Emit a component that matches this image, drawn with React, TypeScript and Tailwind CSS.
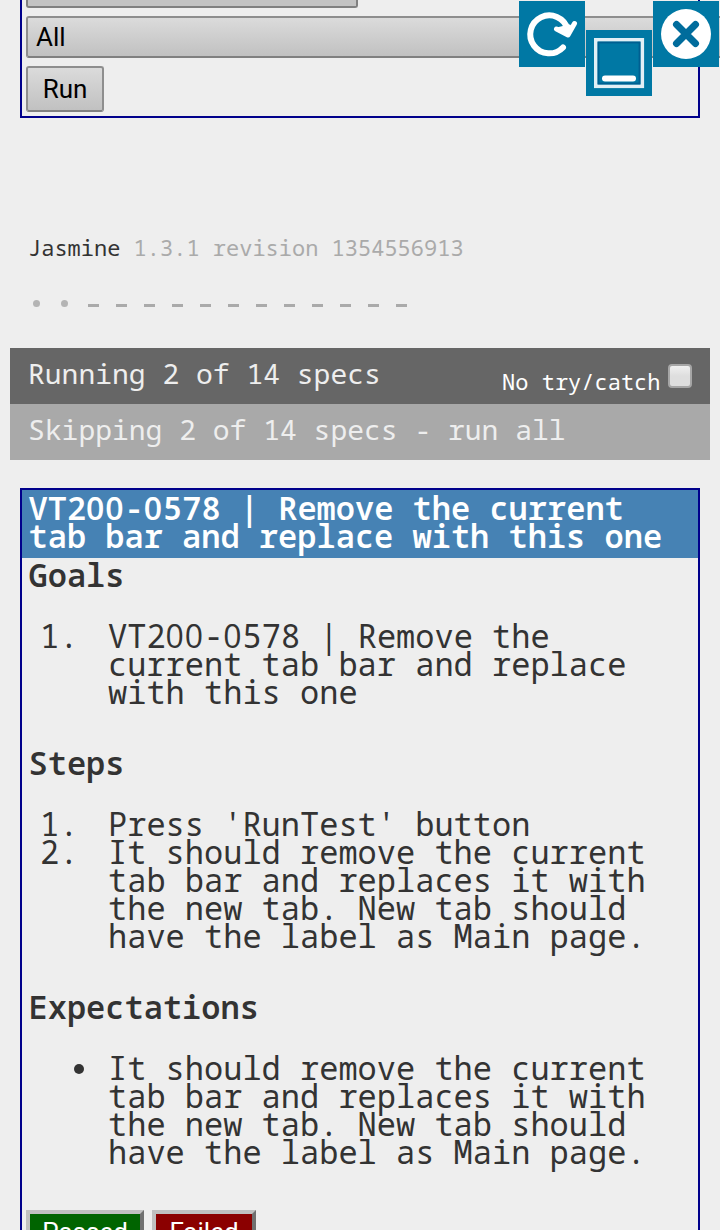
import type { ReactNode } from "react";

// Noto Sans Mono draws a slashed zero; plain zeros come from Open Sans at the same advance.
function Mono({ text }: { text: string }) {
  return (
    <>
      {text.split(/(0+)/).map((part, i) =>
        part.startsWith("0") ? (
          <span key={i} className="font-['Open_Sans',sans-serif] tracking-[0.029em]">{part}</span>
        ) : (
          part
        ),
      )}
    </>
  );
}

function Heading({ children }: { children: ReactNode }) {
  return <h2 className="-mt-px pb-px pl-[0.5px] font-semibold">{children}</h2>;
}

function Item({ marker, lines }: { marker: ReactNode; lines: string[] }) {
  return (
    <li className="flex">
      <span className="w-[68px] shrink-0">{marker}</span>
      <span className="whitespace-nowrap">
        {lines.map((line) => (
          <span key={line} className="block"><Mono text={line} /></span>
        ))}
      </span>
    </li>
  );
}

const replaced = [
  "It should remove the current",
  "tab bar and replaces it with",
  "the new tab. New tab should",
  "have the label as Main page.",
];

const skipped = Array.from({ length: 12 }, (_, i) => i);

export default function App() {
  return (
    <div className="relative flex h-[1230px] w-[720px] flex-col overflow-hidden bg-[#eeeeee] font-['Noto_Sans_Mono',monospace] text-[#333333]">
      <section className="mx-5 flex h-[118px] shrink-0 flex-col items-start border-2 border-t-0 border-[#00008b] pl-1 font-[Roboto,sans-serif] text-[26px] text-black">
        <div className="h-2 w-[332px] shrink-0 rounded-b-[3px] border-2 border-t-0 border-[#808080] bg-[#c3c3c3]" />
        <div className="mt-2 flex h-[42px] w-[720px] shrink-0 items-center rounded-[3px] border-2 border-[#8e8e8e] border-b-[#808080] bg-linear-to-b from-[#dbdbdb] to-[#c1c1c1] pl-2 pt-px">All</div>
        <button className="mt-2 flex h-[46px] w-[78px] shrink-0 items-center justify-center rounded-[3px] border-2 border-[#8e8e8e] border-b-[#808080] bg-linear-to-b from-[#dbdbdb] to-[#c1c1c1] pt-px">Run</button>
      </section>

      <header className="mt-[115px] h-7 shrink-0 pl-7 text-[22px] leading-7">
        Jasmine <span className="text-[#aaaaaa]"><Mono text="1.3.1 revision 1354556913" /></span>
      </header>

      <div className="mt-[28px] flex h-7 shrink-0 items-center pl-[22px]">
        {[0, 1].map((i) => (
          <span key={i} className="flex w-7 justify-center"><i className="h-[7px] w-[7px] rounded-full bg-[#b4b4b4]" /></span>
        ))}
        {skipped.map((i) => (
          <span key={i} className="flex w-7 justify-center pl-0.5 pt-1"><i className="h-[3px] w-[11px] bg-[#aaaaaa]" /></span>
        ))}
      </div>

      <div className="mx-[10px] mt-[31px] flex h-14 shrink-0 justify-between bg-[#666666] pl-[18px] pr-[18px] text-[28px] leading-[50px] text-[#eeeeee]">
        <span>Running 2 of 14 specs</span>
        <label className="flex text-[22px] text-white">
          <span className="pt-2">No try/catch</span>
          <span className="ml-[7.5px] mt-4 h-6 w-6 rounded-[4px] border-2 border-[#a6a6a6] bg-linear-to-b from-[#f0f0f0] via-[#dedede] to-[#dedede]" />
        </label>
      </div>
      <div className="mx-[10px] h-14 shrink-0 bg-[#a9a9a9] pl-[18px] text-[28px] leading-[50px] text-[#eeeeee]">
        Skipping 2 of 14 specs - run all
      </div>

      <section className="mx-5 mt-7 flex h-[800px] shrink-0 flex-col border-2 border-[#00008b] text-[32px] leading-[28px]">
        <h1 className="h-[68px] shrink-0 whitespace-nowrap bg-[#4682b4] pl-[6.5px] pt-1 font-semibold text-white">
          <span className="block"><Mono text="VT200-0578 | Remove the current" /></span>
          <span className="block">tab bar and replace with this one</span>
        </h1>
        <div className="pl-1.5 pt-1">
          <Heading>Goals</Heading>
          <ol className="mt-8 mb-11 pl-3">
            <Item marker="1." lines={["VT200-0578 | Remove the", "current tab bar and replace", "with this one"]} />
          </ol>
          <Heading>Steps</Heading>
          <ol className="mt-8 mb-11 pl-3">
            <Item marker="1." lines={["Press 'RunTest' button"]} />
            <Item marker="2." lines={replaced} />
          </ol>
          <Heading>Expectations</Heading>
          <ul className="mt-8 pl-3">
            <Item marker={<i className="ml-[34px] mt-[10px] block h-[10px] w-[10px] rounded-full bg-[#333333]" />} lines={replaced} />
          </ul>
        </div>
        <div className="mt-11 flex gap-2 pl-1 font-[Roboto,sans-serif] text-[26px] leading-[32px] text-white">
          <button className="h-[44px] w-[118px] border-4 border-[#c0c0c0] border-r-[#707070] border-b-[#707070] bg-[#006400]">Passed</button>
          <button className="h-[44px] w-[104px] border-4 border-[#c0c0c0] border-r-[#707070] border-b-[#707070] bg-[#8b0000]">Failed</button>
        </div>
      </section>

      <div className="absolute left-[519px] top-px flex gap-px">
        <svg width="66" height="66" viewBox="0 0 66 66" fill="none" stroke="white" strokeWidth="6" strokeLinecap="round" strokeLinejoin="round">
          <rect width="66" height="66" fill="#0078a4" stroke="none" />
          <path d="M44 46.500A19 19 0 1 1 48.500 28" />
          <path d="M37.500 28l11.500 6 6.500-11.500" strokeWidth="5" />
          <path d="M38 28l10.500 6 2-9z" fill="white" strokeWidth="3" />
        </svg>
        <svg className="mt-[29px]" width="66" height="66" viewBox="0 0 66 66">
          <rect width="66" height="66" fill="#0078a4" />
          <rect x="9.800" y="9.800" width="46.500" height="46.500" fill="none" stroke="#e2eff5" strokeWidth="3.600" />
          <rect x="12.500" y="12.500" width="41" height="41" fill="none" stroke="#005f91" strokeWidth="1.800" />
          <path d="M19 48.500h28" stroke="white" strokeWidth="6" strokeLinecap="round" />
        </svg>
        <svg width="66" height="66" viewBox="0 0 66 66">
          <rect width="66" height="66" fill="#0078a4" />
          <circle cx="33" cy="33" r="25" fill="white" />
          <path d="M23.500 23.500l19 19M42.500 23.500l-19 19" stroke="#006c9c" strokeWidth="7" strokeLinecap="round" />
        </svg>
      </div>
    </div>
  );
}
